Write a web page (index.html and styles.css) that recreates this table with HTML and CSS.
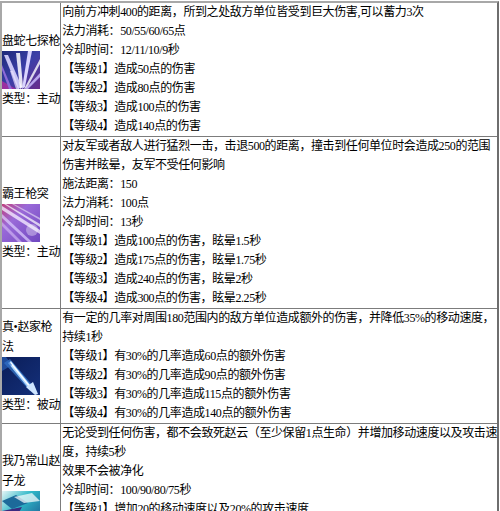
FILE: index.html
```html
<!DOCTYPE html>
<html lang="zh-CN">
<head>
<meta charset="utf-8">
<title>赵云技能</title>
<link rel="stylesheet" href="styles.css">
</head>
<body>
<table class="skills">
  <tr>
    <td class="name">
      <div class="title">盘蛇七探枪</div>
      <svg class="icon" viewBox="0 0 38 38" width="38" height="38">
        <defs>
          <linearGradient id="g1" x1="0" y1="0" x2="1" y2="1">
            <stop offset="0" stop-color="#1d2a78"/>
            <stop offset="0.5" stop-color="#3b3fa8"/>
            <stop offset="1" stop-color="#6a2c8c"/>
          </linearGradient>
        </defs>
        <rect width="38" height="38" fill="url(#g1)"/>
        <polygon points="0,30 0,38 14,38" fill="#9a2fa0"/>
        <polygon points="16,38 2,4 6,4 20,36" fill="#c9c6f4"/>
        <polygon points="18,38 14,2 18,2 21,36" fill="#ffffff" opacity="0.85"/>
        <polygon points="20,38 26,0 30,0 23,36" fill="#d9d4ff"/>
        <polygon points="22,38 38,8 38,13 25,37" fill="#ffffff" opacity="0.8"/>
        <polygon points="23,38 38,22 38,26 26,38" fill="#b9a6ee"/>
        <polygon points="10,38 0,14 0,19 7,38" fill="#8c6ad8"/>
        <polygon points="14,38 8,20 11,20 17,38" fill="#e8e0ff" opacity="0.7"/>
      </svg>
      <div class="type">类型：主动</div>
    </td>
    <td class="desc">向前方冲刺400的距离，所到之处敌方单位皆受到巨大伤害,可以蓄力3次<br>法力消耗：50/55/60/65点<br>冷却时间：12/11/10/9秒<br>【等级1】造成50点的伤害<br>【等级2】造成80点的伤害<br>【等级3】造成100点的伤害<br>【等级4】造成140点的伤害</td>
  </tr>
  <tr>
    <td class="name">
      <div class="title">霸王枪突</div>
      <svg class="icon" viewBox="0 0 38 38" width="38" height="38">
        <defs>
          <linearGradient id="g2" x1="0" y1="0" x2="1" y2="1">
            <stop offset="0" stop-color="#c0407e"/>
            <stop offset="0.35" stop-color="#9a6ad8"/>
            <stop offset="1" stop-color="#7048c0"/>
          </linearGradient>
        </defs>
        <rect width="38" height="38" fill="url(#g2)"/>
        <polygon points="0,2 38,26 38,30 0,6" fill="#f2e8ff" opacity="0.8"/>
        <polygon points="4,0 38,20 38,23 2,0" fill="#ffffff" opacity="0.7"/>
        <polygon points="0,10 30,38 26,38 0,14" fill="#e0d0ff" opacity="0.7"/>
        <polygon points="12,0 38,14 38,16 10,0" fill="#ffffff" opacity="0.5"/>
        <polygon points="0,18 20,38 16,38 0,22" fill="#d8c0f8" opacity="0.6"/>
        <circle cx="30" cy="26" r="6" fill="#ffffff" opacity="0.35"/>
      </svg>
      <div class="type">类型：主动</div>
    </td>
    <td class="desc">对友军或者敌人进行猛烈一击，击退500的距离，撞击到任何单位时会造成250的范围<br>伤害并眩晕，友军不受任何影响<br>施法距离：150<br>法力消耗：100点<br>冷却时间：13秒<br>【等级1】造成100点的伤害，眩晕1.5秒<br>【等级2】造成175点的伤害，眩晕1.75秒<br>【等级3】造成240点的伤害，眩晕2秒<br>【等级4】造成300点的伤害，眩晕2.25秒</td>
  </tr>
  <tr>
    <td class="name">
      <div class="title">真•赵家枪<br>法</div>
      <svg class="icon" viewBox="0 0 38 38" width="38" height="38">
        <defs>
          <linearGradient id="g3" x1="0" y1="0" x2="1" y2="1">
            <stop offset="0" stop-color="#0b1d58"/>
            <stop offset="1" stop-color="#14307a"/>
          </linearGradient>
        </defs>
        <rect width="38" height="38" fill="url(#g3)"/>
        <polygon points="2,6 8,2 32,30 28,34" fill="#3f8ae0" opacity="0.6"/>
        <polygon points="6,6 9,4 30,30 27,32" fill="#a8d4ff"/>
        <polygon points="8,6 9,5 29,30 28,31" fill="#ffffff"/>
        <polygon points="24,30 31,25 36,37 33,38" fill="#cfe6ff"/>
        <polygon points="0,14 10,8 4,0 0,0" fill="#2e6cc8" opacity="0.6"/>
      </svg>
      <div class="type">类型：被动</div>
    </td>
    <td class="desc">有一定的几率对周围180范围内的敌方单位造成额外的伤害，并降低35%的移动速度，<br>持续1秒<br>【等级1】有30%的几率造成60点的额外伤害<br>【等级2】有30%的几率造成90点的额外伤害<br>【等级3】有30%的几率造成115点的额外伤害<br>【等级4】有30%的几率造成140点的额外伤害</td>
  </tr>
  <tr>
    <td class="name">
      <div class="title">我乃常山赵<br>子龙</div>
      <svg class="icon" viewBox="0 0 38 38" width="38" height="38">
        <defs>
          <linearGradient id="g4" x1="0" y1="0" x2="1" y2="1">
            <stop offset="0" stop-color="#e6f6f6"/>
            <stop offset="0.4" stop-color="#2fb8c8"/>
            <stop offset="1" stop-color="#1a4c8a"/>
          </linearGradient>
        </defs>
        <rect width="38" height="38" fill="url(#g4)"/>
        <polygon points="0,10 14,4 26,12 10,18" fill="#1c6a9a"/>
        <polygon points="12,6 30,2 38,10 22,12" fill="#ffffff" opacity="0.7"/>
        <polygon points="0,20 20,16 12,30 0,30" fill="#3a2a80"/>
      </svg>
      <div class="type">类型：主动</div>
    </td>
    <td class="desc">无论受到任何伤害，都不会致死赵云（至少保留1点生命）并增加移动速度以及攻击速<br>度，持续5秒<br>效果不会被净化<br>冷却时间：100/90/80/75秒<br>【等级1】增加20的移动速度以及20%的攻击速度<br>【等级2】增加30的移动速度以及30%的攻击速度<br>【等级3】增加40的移动速度以及40%的攻击速度<br>【等级4】增加50的移动速度以及50%的攻击速度</td>
  </tr>
</table>
</body>
</html>
```
FILE: styles.css
```css
body {
  margin: 0;
  background: #ffffff;
  color: #000000;
  font-family: "Liberation Serif", "Noto Sans CJK SC", serif;
  font-size: 12px;
  line-height: 19px;
  letter-spacing: -0.4px;
}

.skills {
  border-collapse: separate;
  border-spacing: 0;
  width: 499px;
  margin-top: 1px;
  border-style: solid;
  border-width: 2px;
  border-color: #a8a8a8 #6e6e6e #6e6e6e #a8a8a8;
}

.skills td {
  padding: 0;
}

.skills tr + tr td {
  border-top: 1px solid #7c7c7c;
}

.name {
  width: 59px;
  border-right: 1px solid #7c7c7c;
  vertical-align: middle;
  line-height: 20px;
}

.title,
.type {
  white-space: nowrap;
}

.icon {
  display: block;
}

.skills td.desc {
  padding-left: 1px;
  vertical-align: top;
  white-space: nowrap;
}
```
